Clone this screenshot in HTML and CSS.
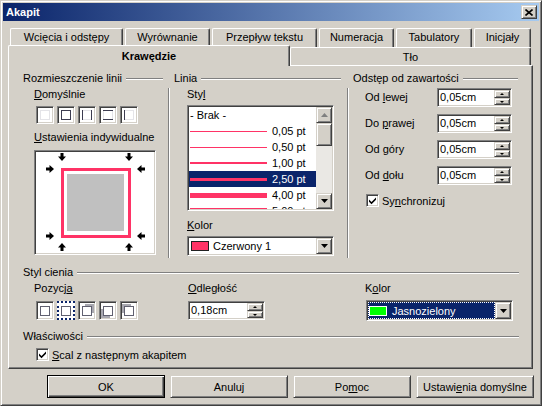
FILE: index.html
```html
<!DOCTYPE html>
<html lang="pl">
<head>
<meta charset="utf-8">
<title>Akapit</title>
<link rel="stylesheet" href="styles.css">
</head>
<body>
<div class="window">
  <div class="titlebar">
    <span class="title">Akapit</span>
    <span class="close raised"><svg width="8" height="7" viewBox="0 0 8 7"><path d="M0.5 0.5L7.5 6.5M7.5 0.5L0.5 6.5" stroke="#000" stroke-width="1.6" fill="none"/></svg></span>
  </div>

  <div class="tabs">
    <div class="tabrow row1">
      <div class="tab t1">Wcięcia i odstępy</div>
      <div class="tab t2">Wyrównanie</div>
      <div class="tab t3">Przepływ tekstu</div>
      <div class="tab t4">Numeracja</div>
      <div class="tab t5">Tabulatory</div>
      <div class="tab t6">Inicjały</div>
    </div>
    <div class="tabrow row2">
      <div class="tab tab2 sel t7">Krawędzie</div>
      <div class="tab tab2 t8">Tło</div>
    </div>
  </div>

  <div class="panel">
    <div class="top">
      <div class="colA">
        <div class="ghead"><span>Rozmieszczenie linii</span><span class="ln"></span></div>
        <div class="body">
          <div class="lbl m2"><u>D</u>omyślnie</div>
          <div class="presets">
            <span class="pbox sunken"><svg width="14" height="14"><rect x="2.5" y="2.5" width="9" height="9" fill="none" stroke="#c8c8d0" stroke-dasharray="1 1"/></svg></span>
            <span class="pbox sunken"><svg width="14" height="14"><rect x="2.5" y="2.5" width="9" height="9" fill="none" stroke="#3c3c50"/></svg></span>
            <span class="pbox sunken"><svg width="14" height="14"><path d="M2.5 2.5H11.5M2.5 11.5H11.5" stroke="#c8c8d0" stroke-dasharray="1 1"/><path d="M2.5 2V12M11.5 2V12" stroke="#3c3c50"/></svg></span>
            <span class="pbox sunken"><svg width="14" height="14"><path d="M2.5 2.5V11.5M11.5 2.5V11.5" stroke="#c8c8d0" stroke-dasharray="1 1"/><path d="M2 2.5H12M2 11.5H12" stroke="#3c3c50"/></svg></span>
            <span class="pbox sunken"><svg width="14" height="14"><path d="M2.5 2.5H11.5V11.5H2.5" fill="none" stroke="#c8c8d0" stroke-dasharray="1 1"/><path d="M2.5 2V12" stroke="#3c3c50"/></svg></span>
          </div>
          <div class="lbl m7"><u>U</u>stawienia indywidualne</div>
          <div class="frame sunken">
            <svg width="118" height="101" viewBox="0 0 118 101">
              <defs>
                <path id="ar" d="M-1.5 -4H1.5V-0.5H4L0 4L-4 -0.5H-1.5Z" fill="#000"/>
              </defs>
              <rect x="31" y="22" width="57" height="57" fill="#c0c0c0"/>
              <rect x="26.5" y="17.5" width="67" height="67" fill="none" stroke="#ff3366" stroke-width="3"/>
              <use href="#ar" transform="translate(26,5)"/>
              <use href="#ar" transform="translate(93,5)"/>
              <use href="#ar" transform="translate(14,17) rotate(-90)"/>
              <use href="#ar" transform="translate(14,84) rotate(-90)"/>
              <use href="#ar" transform="translate(105,17) rotate(90)"/>
              <use href="#ar" transform="translate(105,84) rotate(90)"/>
              <use href="#ar" transform="translate(26,95) rotate(180)"/>
              <use href="#ar" transform="translate(93,95) rotate(180)"/>
            </svg>
          </div>
        </div>
      </div>

      <div class="colB">
        <div class="ghead"><span>Linia</span><span class="ln"></span></div>
        <div class="body">
          <div class="lbl m2">Sty<u>l</u></div>
          <div class="list sunken">
            <div class="items">
              <div class="it"><span class="brak">- Brak -</span></div>
              <div class="it"><span class="ln lw1"></span><span class="pt">0,05 pt</span></div>
              <div class="it"><span class="ln lw1"></span><span class="pt">0,50 pt</span></div>
              <div class="it"><span class="ln lw2"></span><span class="pt">1,00 pt</span></div>
              <div class="it sel"><span class="ln lw3"></span><span class="pt">2,50 pt</span></div>
              <div class="it"><span class="ln lw5"></span><span class="pt">4,00 pt</span></div>
              <div class="it"><span class="ln lw7"></span><span class="pt">5,00 pt</span></div>
            </div>
            <div class="sbar">
              <span class="sbtn raised"><svg width="7" height="4" viewBox="0 0 7 4"><path d="M0 4H7L3.5 0Z" fill="#808080"/></svg></span>
              <span class="thumb raised"></span>
              <span class="track"></span>
              <span class="sbtn raised"><svg width="7" height="4" viewBox="0 0 7 4"><path d="M0 0H7L3.5 4Z" fill="#000"/></svg></span>
            </div>
          </div>
          <div class="lbl m8"><u>K</u>olor</div>
          <div class="combo sunken">
            <span class="sw red"></span>
            <span class="ctext">Czerwony 1</span>
            <span class="dd raised"><svg width="7" height="4" viewBox="0 0 7 4"><path d="M0 0H7L3.5 4Z" fill="#000"/></svg></span>
          </div>
        </div>
      </div>

      <div class="colC">
        <div class="ghead"><span>Odstęp od zawartości</span><span class="ln"></span></div>
        <div class="body">
          <div class="row first"><span class="lbl rl">Od <u>l</u>ewej</span>
            <span class="spin sunken"><span class="val">0,05cm</span><span class="spinbtns"><span class="sb up raised"></span><span class="sb dn raised"></span></span></span></div>
          <div class="row"><span class="lbl rl">Do <u>p</u>rawej</span>
            <span class="spin sunken"><span class="val">0,05cm</span><span class="spinbtns"><span class="sb up raised"></span><span class="sb dn raised"></span></span></span></div>
          <div class="row"><span class="lbl rl">Od <u>g</u>óry</span>
            <span class="spin sunken"><span class="val">0,05cm</span><span class="spinbtns"><span class="sb up raised"></span><span class="sb dn raised"></span></span></span></div>
          <div class="row"><span class="lbl rl">Od <u>d</u>ołu</span>
            <span class="spin sunken"><span class="val">0,05cm</span><span class="spinbtns"><span class="sb up raised"></span><span class="sb dn raised"></span></span></span></div>
          <div class="chkrow sync">
            <span class="cb sunken"><svg width="9" height="9" viewBox="0 0 9 9"><path d="M1 3.5L3.5 6L8 1.5V3.7L3.5 8.2L1 5.7Z" fill="#000"/></svg></span>
            <span class="cbl">Sy<u>n</u>chronizuj</span>
          </div>
        </div>
      </div>
    </div>

    <div class="ghead sec s1"><span>Styl cienia</span><span class="ln"></span></div>
    <div class="shadow-row">
      <div class="sc1">
        <div class="lbl">Pozycj<u>a</u></div>
        <div class="sboxes">
          <span class="sbox sunken"><svg width="14" height="15"><rect x="2.5" y="3.5" width="9" height="9" fill="#fff" stroke="#606070"/></svg></span>
          <span class="sbox focus-box"><svg width="14" height="15"><rect x="2.5" y="3.5" width="9" height="9" fill="#fff" stroke="#606070"/></svg></span>
          <span class="sbox sunken"><svg width="14" height="15"><rect x="5" y="1" width="9" height="9" fill="#a8a8b0"/><rect x="2.5" y="3.5" width="9" height="9" fill="#fff" stroke="#606070"/></svg></span>
          <span class="sbox sunken"><svg width="14" height="15"><rect x="0" y="6" width="9" height="9" fill="#a8a8b0"/><rect x="2.5" y="3.5" width="9" height="9" fill="#fff" stroke="#606070"/></svg></span>
          <span class="sbox sunken"><svg width="14" height="15"><rect x="0" y="1" width="9" height="9" fill="#a8a8b0"/><rect x="2.5" y="3.5" width="9" height="9" fill="#fff" stroke="#606070"/></svg></span>
        </div>
      </div>
      <div class="sc2">
        <div class="lbl"><u>O</u>dległość</div>
        <span class="spin sunken wide"><span class="val">0,18cm</span><span class="spinbtns"><span class="sb up raised"></span><span class="sb dn raised"></span></span></span>
      </div>
      <div class="sc3">
        <div class="lbl">K<u>o</u>lor</div>
        <div class="combo sunken scombo">
          <span class="focus"><span class="sw green"></span><span class="ctext">Jasnozielony</span></span>
          <span class="dd raised"><svg width="7" height="4" viewBox="0 0 7 4"><path d="M0 0H7L3.5 4Z" fill="#000"/></svg></span>
        </div>
      </div>
    </div>

    <div class="ghead sec s2"><span>Właściwości</span><span class="ln"></span></div>
    <div class="chkrow props">
      <span class="cb sunken"><svg width="9" height="9" viewBox="0 0 9 9"><path d="M1 3.5L3.5 6L8 1.5V3.7L3.5 8.2L1 5.7Z" fill="#000"/></svg></span>
      <span class="cbl"><u>S</u>cal z następnym akapitem</span>
    </div>
  </div>

  <div class="buttons">
    <span class="btn def">OK</span>
    <span class="btn raised">Anuluj</span>
    <span class="btn raised">Po<u>m</u>oc</span>
    <span class="btn raised">Ustawi<u>e</u>nia domyślne</span>
  </div>
</div>
</body>
</html>
```

FILE: styles.css
```css
* { box-sizing: border-box; }
html, body { margin: 0; padding: 0; }
body {
  width: 542px; height: 406px; overflow: hidden;
  font-family: "Liberation Sans", Arial, sans-serif;
  font-size: 11px; color: #000; background: #d4d0c8;
}
u { text-decoration: underline; text-underline-offset: 1px; }

.raised {
  background: #d4d0c8;
  border: 1px solid; border-color: #d4d0c8 #404040 #404040 #d4d0c8;
  box-shadow: inset 1px 1px #fff, inset -1px -1px #808080;
}
.sunken {
  background: #fff;
  border: 1px solid; border-color: #808080 #fff #fff #808080;
  box-shadow: inset 1px 1px #404040, inset -1px -1px #d4d0c8;
  padding: 1px;
}

.window {
  width: 542px; height: 406px; background: #d4d0c8;
  border: 1px solid; border-color: #d4d0c8 #404040 #404040 #d4d0c8;
  box-shadow: inset 1px 1px #fff, inset -1px -1px #808080;
  padding: 2px;
}
.titlebar {
  height: 18px; display: flex; justify-content: space-between; align-items: flex-start;
  background: linear-gradient(to right, #0a246a, #a6caf0);
  color: #fff; font-weight: bold; padding-left: 3px;
}
.title { line-height: 18px; }
.close {
  width: 16px; height: 14px; margin: 2px 2px 0 0;
  display: flex; align-items: center; justify-content: center;
}

/* tabs */
.tabs { margin-top: 7px; }
.tabrow { display: flex; align-items: flex-start; }
.row1 { margin-left: 7px; gap: 2px; height: 19px; }
.row2 { margin-left: 5px; height: 18px; }
.tab {
  height: 19px; background: #d4d0c8;
  border-top: 1px solid #fff; border-left: 1px solid #fff; border-right: 1px solid #404040;
  box-shadow: inset -1px 0 #808080;
  border-radius: 2px 2px 0 0;
  text-align: center; line-height: 13px; padding-top: 2px; white-space: nowrap;
}
.t1 { width: 113px; } .t2 { width: 85px; } .t3 { width: 105px; }
.t4 { width: 75px; } .t5 { width: 76px; } .t6 { width: 57px; }
.tab2 { height: 18px; padding-top: 3px; }
.t7 { width: 282px; } .t8 { width: 241px; }
.sel {
  position: relative; z-index: 2;
  height: 21px; margin-top: -2px; margin-bottom: -1px; padding-top: 4px; font-weight: bold;
}

/* panel */
.panel {
  position: relative; z-index: 1;
  margin-left: 5px; width: 525px; height: 304px; background: #d4d0c8;
  border: 1px solid; border-color: #fff #404040 #404040 #fff;
  box-shadow: inset -1px -1px #808080;
}
.top { display: flex; margin-top: 6px; height: 186px; }
.ghead { display: flex; align-items: center; height: 13px; line-height: 13px; white-space: nowrap; }
.ghead .ln { flex: 1; height: 2px; border-top: 1px solid #808080; border-bottom: 1px solid #fff; margin-left: 4px; }
.body { margin-top: 3px; height: 170px; }
.lbl { height: 13px; line-height: 13px; white-space: nowrap; }
.m2 { margin-top: 2px; } .m7 { margin-top: 7px; } .m8 { margin-top: 8px; }

.colA { margin-left: 14px; width: 145px; }
.colA .ghead { margin-right: 5px; }
.colA .body { padding-left: 11px; }
.colB { width: 179px; }
.colB .ghead { padding-left: 6px; padding-right: 6px; }
.colB .body, .colC .body { border-left: 1px solid #808080; box-shadow: inset 1px 0 #fff; }
.colB .body { padding-left: 18px; }
.colC { width: 171px; }
.colC .ghead { padding-left: 6px; }
.colC .body { padding-left: 17px; }

.presets { display: flex; gap: 3px; margin: 5px 0 0 2px; }
.pbox { width: 18px; height: 18px; display: block; }
.pbox svg, .sbox svg { display: block; }
.frame { width: 122px; height: 105px; margin-top: 6px; }
.frame svg { display: block; }

/* list */
.list { width: 147px; height: 106px; margin-top: 4px; display: flex; }
.items { flex: 1; overflow: hidden; }
.it { height: 16px; display: flex; align-items: center; white-space: nowrap; }
.it .ln { width: 77px; margin-left: 1px; background: #ff3366; flex: none; }
.lw1 { height: 1px; } .lw2 { height: 2px; } .lw3 { height: 3px; } .lw5 { height: 5px; } .lw7 { height: 7px; }
.it .pt { margin-left: 5px; }
.brak { margin-left: 1px; }
.it.sel { background: #0a246a; color: #fff; position: static; height: 16px; margin: 0; padding: 0; font-weight: normal; }
.sbar { width: 16px; display: flex; flex-direction: column; background: #eae8e4; }
.sbtn { height: 16px; display: flex; align-items: center; justify-content: center; }
.sbtn svg { display: block; }
.thumb { height: 23px; display: block; }
.track { flex: 1; }

/* combo */
.combo { width: 147px; height: 20px; margin-top: 4px; display: flex; align-items: center; }
.sw { width: 18px; height: 10px; flex: none; }
.red { background: #ff3366; border: 1px solid #202020; margin-left: 2px; }
.ctext { margin-left: 4px; white-space: nowrap; }
.dd { margin-left: auto; width: 16px; height: 100%; display: flex; align-items: center; justify-content: center; flex: none; }
.dd svg { display: block; }

/* spin rows */
.row { display: flex; align-items: center; height: 19px; margin-top: 7px; }
.row.first { margin-top: 1px; }
.rl { width: 72px; }
.spin { width: 75px; height: 19px; display: flex; }
.spin.wide { width: 77px; margin-top: 6px; }
.val { flex: 1; padding-left: 1px; line-height: 15px; white-space: nowrap; }
.spinbtns { width: 16px; display: flex; flex-direction: column; }
.sb { display: flex; align-items: center; justify-content: center; }
.sb.up { height: 8px; }
.sb.dn { height: 7px; }
.sb::after { content: ""; width: 0; height: 0; border-left: 2px solid transparent; border-right: 2px solid transparent; }
.sb.up::after { border-bottom: 2px solid #000; }
.sb.dn::after { border-top: 2px solid #000; }

/* checkboxes */
.chkrow { display: flex; align-items: center; height: 13px; }
.cb { width: 13px; height: 13px; display: flex; align-items: center; justify-content: center; padding: 0; }
.cb svg { display: block; }
.cbl { margin-left: 3px; white-space: nowrap; }
.sync { margin-top: 9px; margin-left: 1px; }

/* shadow section */
.sec { margin-left: 14px; margin-right: 13px; }
.s1 { margin-top: 8px; }
.s2 { margin-top: 10px; }
.shadow-row { display: flex; margin-top: 3px; margin-left: 25px; height: 38px; }
.sc1 { width: 154px; }
.sc2 { width: 177px; }
.sboxes { display: flex; gap: 3px; margin: 6px 0 0 2px; }
.sbox { width: 18px; height: 19px; display: block; }
.focus-box { background: #fff; border: 2px dotted #0a246a; }
.scombo { height: 21px; margin-top: 5px; margin-left: 1px; }
.focus {
  flex: 1; height: 100%; display: flex; align-items: center;
  background: #0a246a; color: #fff; border: 1px dotted #fff;
}
.green { background: #00ff00; border: 1px solid #fff; height: 10px; }
.focus .ctext { margin-left: 5px; }
.props { margin-top: 5px; margin-left: 27px; }

/* buttons */
.buttons { display: flex; gap: 5px; margin-left: 44px; margin-top: 6px; }
.btn { width: 118px; height: 23px; display: flex; align-items: center; justify-content: center; white-space: nowrap; }
.btn.def {
  background: #d4d0c8; border: 1px solid #000;
  box-shadow: inset 1px 1px #fff, inset -1px -1px #404040, inset -2px -2px #808080;
}
```
